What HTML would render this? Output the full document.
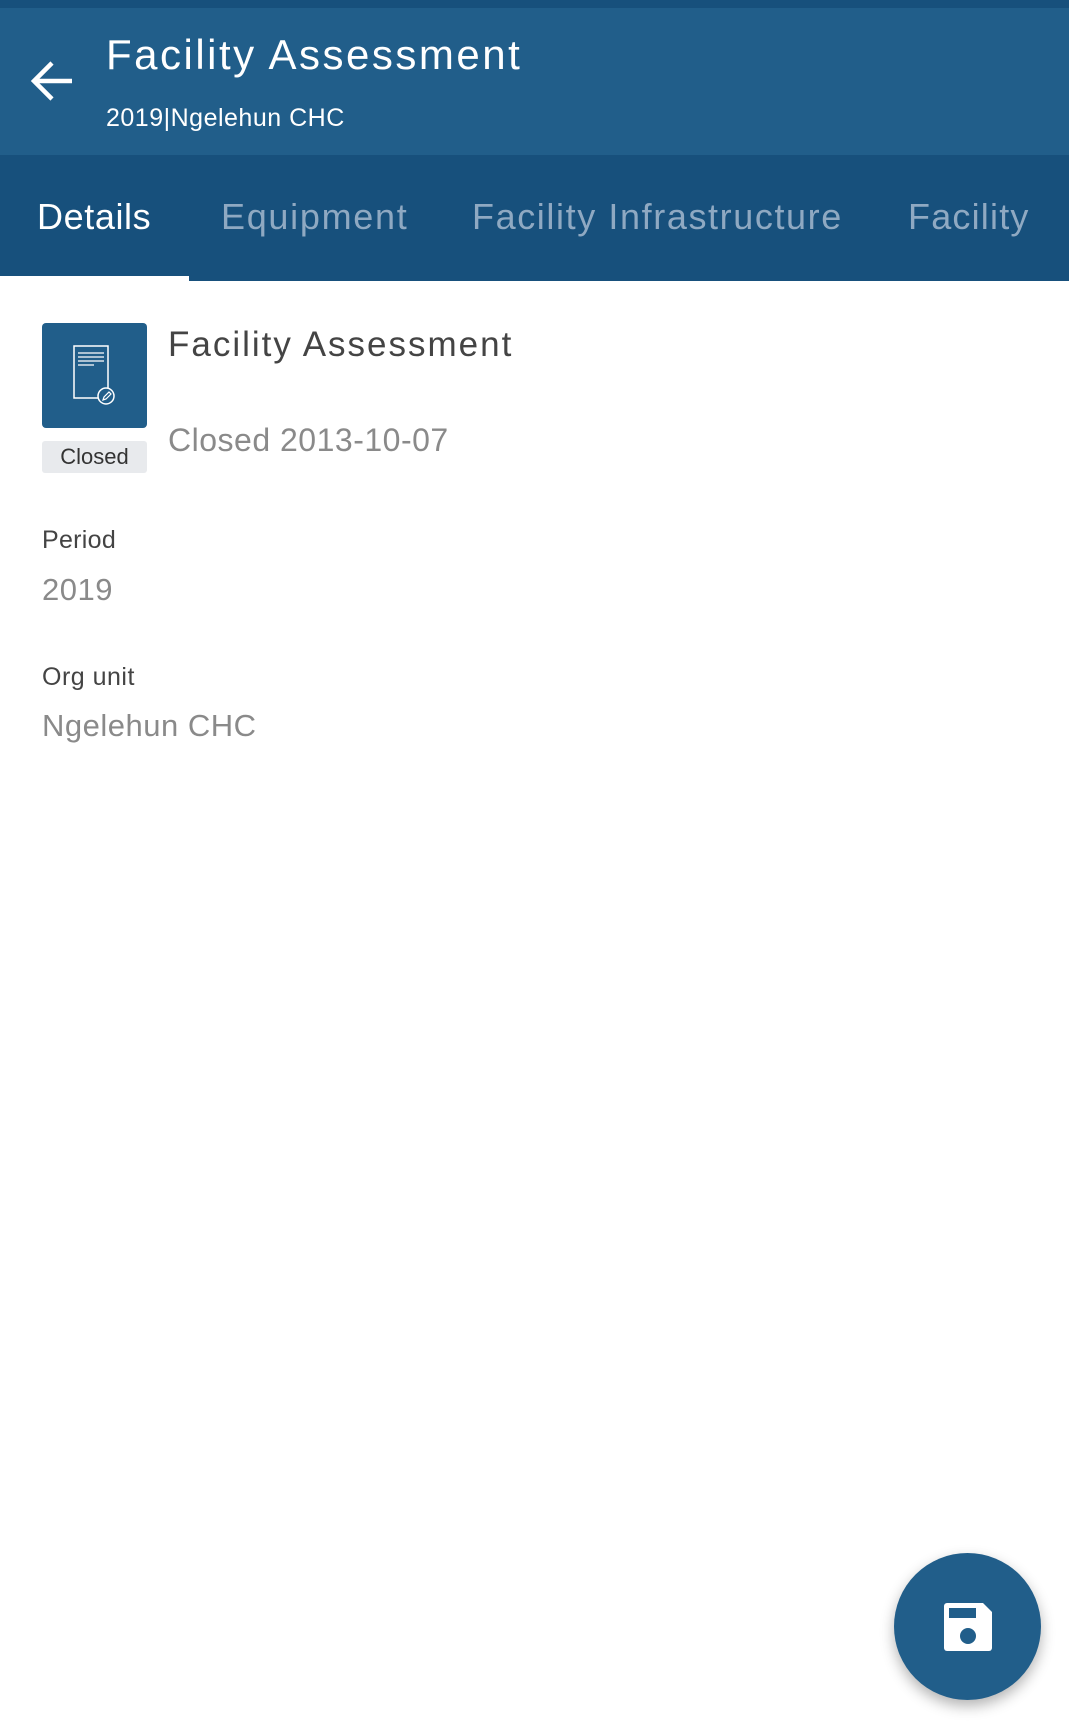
<!DOCTYPE html>
<html><head><meta charset="utf-8"><style>
*{margin:0;padding:0;box-sizing:border-box}
body{width:1069px;height:1723px;background:#fff;position:relative;overflow:hidden;font-family:"Liberation Sans",sans-serif}
.a{position:absolute;line-height:1;white-space:nowrap}
</style></head><body>
<div class="a" style="left:0;top:0;width:1069px;height:8px;background:#17507c"></div>
<div class="a" style="left:0;top:8px;width:1069px;height:147px;background:#215e8a"></div>
<div class="a" style="left:0;top:155px;width:1069px;height:126px;background:#17507c"></div>
<div class="a" style="left:0;top:276px;width:189px;height:5px;background:#fff"></div>
<svg class="a" style="left:28px;top:59px" width="50" height="46" viewBox="0 0 50 46"><path d="M44 22H8M24 4L6 22l18 18" stroke="#fff" stroke-width="4.5" fill="none"/></svg>
<div class="a" style="left:106px;top:34px;font-size:42px;color:#fff;letter-spacing:2.5px">Facility Assessment</div>
<div class="a" style="left:106px;top:106px;font-size:25px;color:#fff;letter-spacing:0.5px">2019|Ngelehun CHC</div>
<div class="a" style="left:37px;top:199px;font-size:36px;color:#fff;letter-spacing:0.6px">Details</div>
<div class="a" style="left:221px;top:199px;font-size:36px;color:#8fa9c2;letter-spacing:1.7px">Equipment</div>
<div class="a" style="left:472px;top:199px;font-size:36px;color:#8fa9c2;letter-spacing:1.6px">Facility Infrastructure</div>
<div class="a" style="left:908px;top:199px;font-size:36px;color:#8fa9c2;letter-spacing:1.2px">Facility</div>
<div class="a" style="left:42px;top:323px;width:105px;height:105px;background:#215e8a;border-radius:4px"></div>
<svg class="a" style="left:42px;top:323px" width="105" height="105" viewBox="0 0 105 105">
<g stroke="#fff" fill="none" stroke-width="1.5"><path d="M58 75H32V23h34v46"/><path d="M36 30h26M36 34h26M36 38h26M36 42h16" stroke-width="1.2"/><circle cx="64" cy="73" r="8" fill="#215e8a"/><path d="M61 77l1-3 5-5 2 2-5 5z" stroke-width="1.2"/></g></svg>
<div class="a" style="left:42px;top:441px;width:105px;height:32px;background:#e8eaed;border-radius:3px;font-size:22px;color:#333;text-align:center;line-height:32px">Closed</div>
<div class="a" style="left:168px;top:327px;font-size:35px;color:#444;letter-spacing:2px">Facility Assessment</div>
<div class="a" style="left:168px;top:424px;font-size:32px;color:#8a8a8a;letter-spacing:0.5px">Closed 2013-10-07</div>
<div class="a" style="left:42px;top:528px;font-size:25px;color:#444;letter-spacing:0.3px">Period</div>
<div class="a" style="left:42px;top:574px;font-size:31px;color:#8a8a8a;letter-spacing:0.5px">2019</div>
<div class="a" style="left:42px;top:665px;font-size:25px;color:#444;letter-spacing:0.5px">Org unit</div>
<div class="a" style="left:42px;top:710px;font-size:31px;color:#8a8a8a;letter-spacing:0.5px">Ngelehun CHC</div>
<div class="a" style="left:894px;top:1553px;width:147px;height:147px;border-radius:50%;background:#215e8a;box-shadow:0 6px 14px rgba(0,0,0,.3)"></div>
<svg class="a" style="left:944px;top:1603px" width="48" height="48" viewBox="0 0 48 48"><path d="M3 0h36l9 9v36a3 3 0 0 1-3 3H3a3 3 0 0 1-3-3V3a3 3 0 0 1 3-3z" fill="#fff"/><rect x="5" y="5" width="27" height="10" fill="#215e8a"/><circle cx="24" cy="33" r="8" fill="#215e8a"/></svg>
</body></html>
